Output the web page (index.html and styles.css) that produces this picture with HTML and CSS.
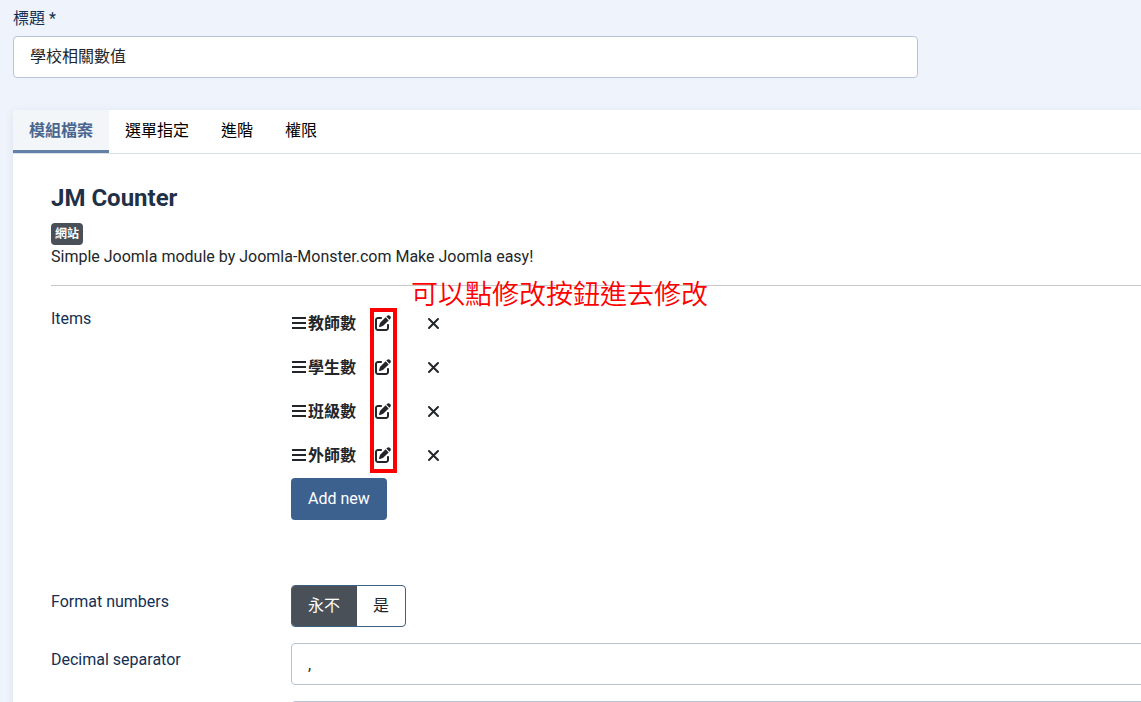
FILE: index.html
```html
<!DOCTYPE html>
<html lang="zh-Hant">
<head>
    <meta charset="UTF-8">
    <meta name="viewport" content="width=device-width, initial-scale=1.0">
    <title>JM Counter</title>
    <link rel="stylesheet" href="styles.css">
</head>
<body>
    <!-- Icons -->
    <svg class="sprite" aria-hidden="true">
        <symbol id="icon-bars" viewBox="0 0 16 16">
            <path d="M1 1h14v2H1zM1 6h14v2H1zM1 11h14v2H1z"/>
        </symbol>
        <symbol id="icon-edit" viewBox="0 0 512 512">
            <path d="M471.6 21.7c-21.9-21.9-57.3-21.9-79.2 0L362.3 51.7l97.9 97.9 30.1-30.1c21.9-21.9 21.9-57.3 0-79.2L471.6 21.7zm-299.2 220c-6.1 6.1-10.8 13.6-13.5 21.9l-29.6 88.8c-2.9 8.6-.6 18.1 5.8 24.6s15.9 8.7 24.6 5.8l88.8-29.6c8.2-2.7 15.7-7.4 21.9-13.5L437.7 172.3 339.7 74.3 172.4 241.7zM96 64C43 64 0 107 0 160V416c0 53 43 96 96 96H352c53 0 96-43 96-96V320c0-17.7-14.3-32-32-32s-32 14.3-32 32v96c0 17.7-14.3 32-32 32H96c-17.7 0-32-14.3-32-32V160c0-17.7 14.3-32 32-32h96c17.7 0 32-14.3 32-32s-14.3-32-32-32H96z"/>
        </symbol>
        <symbol id="icon-close" viewBox="0 0 16 16">
            <path d="M4 4l9 9M13 4l-9 9" fill="none" stroke="currentColor" stroke-width="2" stroke-linecap="round"/>
        </symbol>
    </svg>

    <form class="module-form">
        <div class="title-field">
            <label for="title">標題 *</label>
            <input class="form-control" type="text" id="title" value="學校相關數值">
        </div>

        <main class="panel">
            <div class="tabs" role="tablist">
                <button class="tab active" type="button" role="tab" aria-selected="true">模組檔案</button>
                <button class="tab" type="button" role="tab">選單指定</button>
                <button class="tab" type="button" role="tab">進階</button>
                <button class="tab" type="button" role="tab">權限</button>
            </div>

            <div class="panel-body">
                <h2>JM Counter</h2>
                <div class="badge-row"><span class="badge">網站</span></div>
                <p class="description">Simple Joomla module by Joomla-Monster.com Make Joomla easy!</p>
                <hr>

                <div class="control-group items-group">
                    <div class="control-label">Items</div>
                    <div class="controls">
                        <ul class="items">
                            <li class="item">
                                <span class="item-name"><svg class="icon"><use href="#icon-bars"/></svg>教師數</span>
                                <button class="icon-button" type="button" aria-label="Edit"><svg class="icon"><use href="#icon-edit"/></svg></button>
                                <button class="icon-button" type="button" aria-label="Remove"><svg class="icon"><use href="#icon-close"/></svg></button>
                            </li>
                            <li class="item">
                                <span class="item-name"><svg class="icon"><use href="#icon-bars"/></svg>學生數</span>
                                <button class="icon-button" type="button" aria-label="Edit"><svg class="icon"><use href="#icon-edit"/></svg></button>
                                <button class="icon-button" type="button" aria-label="Remove"><svg class="icon"><use href="#icon-close"/></svg></button>
                            </li>
                            <li class="item">
                                <span class="item-name"><svg class="icon"><use href="#icon-bars"/></svg>班級數</span>
                                <button class="icon-button" type="button" aria-label="Edit"><svg class="icon"><use href="#icon-edit"/></svg></button>
                                <button class="icon-button" type="button" aria-label="Remove"><svg class="icon"><use href="#icon-close"/></svg></button>
                            </li>
                            <li class="item">
                                <span class="item-name"><svg class="icon"><use href="#icon-bars"/></svg>外師數</span>
                                <button class="icon-button" type="button" aria-label="Edit"><svg class="icon"><use href="#icon-edit"/></svg></button>
                                <button class="icon-button" type="button" aria-label="Remove"><svg class="icon"><use href="#icon-close"/></svg></button>
                            </li>
                        </ul>
                        <button class="btn-add" type="button">Add new</button>

                        <!-- Notes over the list -->
                        <div class="note-frame"></div>
                        <div class="note-text">可以點修改按鈕進去修改</div>
                    </div>
                </div>

                <div class="control-group" role="radiogroup" aria-labelledby="format-label">
                    <div class="control-label" id="format-label">Format numbers</div>
                    <div class="controls">
                        <div class="switcher">
                            <input type="radio" name="format" id="format-no" checked>
                            <label for="format-no">永不</label>
                            <input type="radio" name="format" id="format-yes">
                            <label for="format-yes">是</label>
                        </div>
                    </div>
                </div>

                <div class="control-group">
                    <label class="control-label" for="decimal">Decimal separator</label>
                    <div class="controls">
                        <input class="form-control" type="text" id="decimal" value=",">
                    </div>
                </div>

                <div class="control-group">
                    <div class="control-label"></div>
                    <div class="controls">
                        <input class="form-control" type="text" aria-label="Separator">
                    </div>
                </div>
            </div>
        </main>
    </form>
</body>
</html>
```
FILE: styles.css
```css
* {
    margin: 0;
    padding: 0;
    box-sizing: border-box;
}

body {
    height: 100vh;
    overflow: hidden;
    background: #eff3fb;
    color: #22262a;
    font-family: Roboto, "Noto Sans CJK TC", sans-serif;
    font-size: 16px;
    line-height: 24px;
}

button,
input {
    font: inherit;
    color: inherit;
}

button {
    border: none;
    background: none;
    cursor: pointer;
}

.sprite {
    position: absolute;
    width: 0;
    height: 0;
}

.icon {
    width: 16px;
    height: 16px;
    fill: currentColor;
    flex: none;
}

.module-form {
    padding: 7px 0 0 13px;
}

/* Title */
.title-field {
    display: flex;
    flex-direction: column;
    gap: 5px;
    width: 81%;
    padding-right: 9px;
    margin-bottom: 32px;
    color: #132f53;
}

.form-control {
    display: block;
    width: 100%;
    height: 42px;
    padding: 0 16px;
    border: 1px solid #b9c5d6;
    border-radius: 4px;
    background: #fff;
    color: #22262a;
}

.title-field .form-control {
    padding-bottom: 4px;
}

/* Panel and tabs */
.panel {
    background: #fff;
    border-top-left-radius: 4px;
    box-shadow: 0 2px 10px rgba(20, 40, 90, 0.08);
}

.tabs {
    display: flex;
    border-bottom: 1px solid #d9e1e6;
}

.tab {
    height: 43px;
    padding: 2px 16px 0;
    border-bottom: 3px solid transparent;
    color: #000;
}

.tab.active {
    border-bottom-color: #6480a8;
    border-top-left-radius: 4px;
    background: #f2f6f9;
    color: #4a658f;
    font-weight: 700;
}

/* The fields run on past the right edge */
.panel-body {
    margin-right: -16px;
    padding: 30px 0 16px 38px;
}

h2 {
    color: #1f3047;
    font-size: 24px;
    line-height: 28px;
    margin-bottom: 11px;
}

.badge-row {
    display: flex;
}

.badge {
    padding: 0 4px;
    border-radius: 4px;
    background: #495057;
    color: #fff;
    font-size: 12px;
    font-weight: 700;
    line-height: 22px;
}

hr {
    border: none;
    border-top: 1px solid #c5c7c9;
    margin: 16px 0;
}

/* Form rows */
.control-group {
    display: flex;
    margin-bottom: 16px;
}

.items-group {
    margin-bottom: 65px;
}

.control-label {
    flex: none;
    width: 240px;
    padding-top: 5px;
    color: #132f53;
}

.controls {
    position: relative;
    flex: 1;
}

.items {
    list-style: none;
}

.item {
    display: flex;
    align-items: center;
    height: 44px;
}

.item-name {
    display: flex;
    align-items: center;
    gap: 1px;
    width: 67px;
    font-weight: 700;
}

.icon-button {
    display: flex;
    align-items: center;
    justify-content: center;
    width: 50px;
    height: 42px;
    padding-bottom: 2px;
}

.btn-add {
    height: 42px;
    padding: 0 17px;
    border-radius: 4px;
    background: #3d618f;
    color: #fff;
}

.note-frame {
    position: absolute;
    top: 6px;
    left: 79px;
    width: 27px;
    height: 165px;
    border: 4px solid #f00;
    pointer-events: none;
}

.note-text {
    position: absolute;
    top: -28px;
    left: 120px;
    color: #f00;
    font-size: 27px;
    font-weight: 350;
    line-height: 42px;
    white-space: nowrap;
}

.switcher {
    display: inline-flex;
    overflow: hidden;
    vertical-align: top;
    border: 1px solid #3f5f80;
    border-radius: 4px;
}

.switcher input {
    position: absolute;
    opacity: 0;
}

.switcher label {
    height: 40px;
    padding: 0 16px;
    line-height: 40px;
}

.switcher label + input + label {
    border-left: 1px solid #495057;
}

.switcher input:checked + label {
    background: #495057;
    color: #fff;
}
```
